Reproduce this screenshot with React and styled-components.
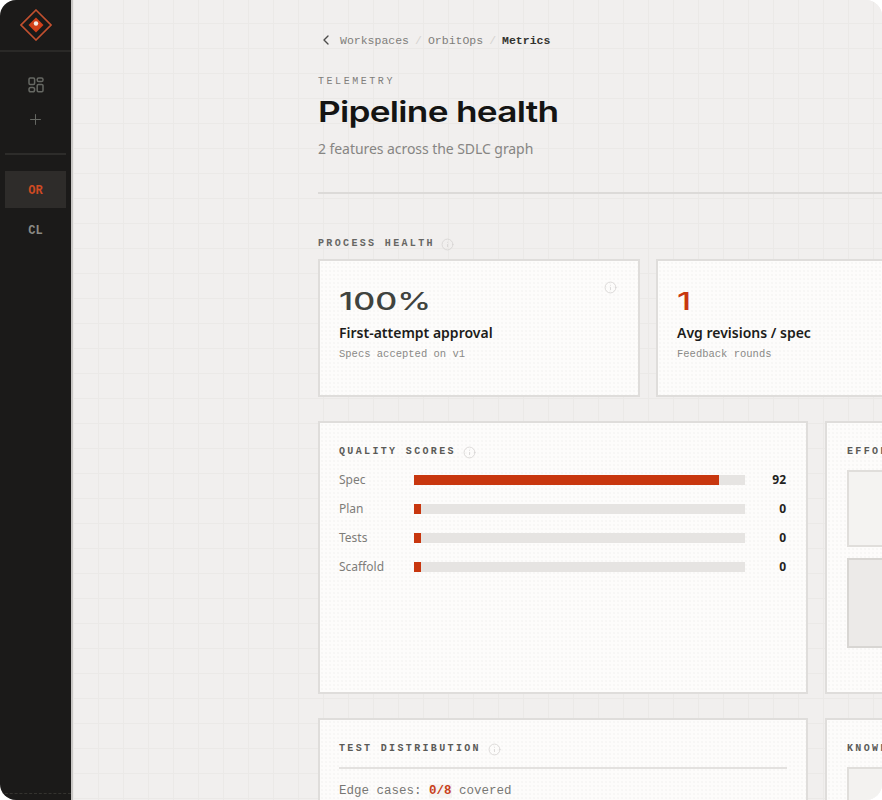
import React from 'react';
import styled, { createGlobalStyle } from 'styled-components';
import { ChevronLeft, Info, Plus } from 'lucide-react';

const Global = createGlobalStyle`
  html, body { margin: 0; padding: 0; background: #fff; }
  * { box-sizing: border-box; }
`;
const MONO = '"Liberation Mono", "DejaVu Sans Mono", monospace';
const SANS = '"Noto Sans", "Open Sans", sans-serif';
const DISPLAY = 'Inter, "Liberation Sans", sans-serif';
const DOTS = 'radial-gradient(circle, #f5f4f2 0.6px, transparent 0.9px)';

const Frame = styled.div`
  width: 882px; height: 800px; display: flex; overflow: hidden;
  border-radius: 16px; background: #f1efee;
  font-family: ${SANS};
`;
const Sidebar = styled.aside`
  width: 73px; flex: none; background: #1b1a19; border-right: 2px solid #c9c7c5;
  display: flex; flex-direction: column; align-items: center; height: 800px;
`;
const LogoCell = styled.div`
  width: 100%; height: 52px; display: flex; align-items: center; justify-content: center;
  border-bottom: 2px solid #2a2927;
`;
const Tools = styled.div`
  width: 61px; height: 103px; display: flex; flex-direction: column; align-items: center;
  padding-top: 25px; gap: 18px; border-bottom: 2px solid #2d2c2a; color: #666863;
`;
const Workspaces = styled.div`
  flex: 1; width: 61px; padding-top: 16px; display: flex; flex-direction: column; gap: 3px;
`;
const Workspace = styled.div`
  height: 37px; padding-top: 3px; display: flex; align-items: center; justify-content: center;
  font: 700 12px ${MONO};
  background: ${p => (p.$active ? '#2e2c2a' : 'transparent')};
  color: ${p => (p.$active ? '#cf4a22' : '#8b8b86')};
`;
const SideFoot = styled.div`
  width: 100%; height: 7px; border-top: 1px dashed #34332f;
`;
const Main = styled.main`
  flex: 1; min-width: 0; height: 800px; overflow: hidden; padding: 32px 0 0 245px;
  background-color: #f1efee;
  background-image: linear-gradient(#ebe9e7 1px, transparent 1px), linear-gradient(90deg, #ebe9e7 1px, transparent 1px);
  background-size: 25px 25px;
  background-position: 0 23px;
`;
const Crumbs = styled.nav`
  display: flex; align-items: center; height: 16px; font: 400 11.5px ${MONO}; color: #7f7e7b; white-space: nowrap;
  svg { margin-right: 6px; color: #4c4c4a; }
`;
const CrumbSep = styled.span`color: #d5d3d0; margin: 0 6px;`;
const CrumbNow = styled.span`font-weight: 700; color: #33332f;`;
const Eyebrow = styled.div`
  margin-top: 27px; height: 14px; font: 400 10px/14px ${MONO}; letter-spacing: 2.55px; color: #7f7e7b;
`;
const Title = styled.h1`
  margin: 5px 0 0; display: inline-block; transform: scaleX(1.215); transform-origin: left center;
  font: 600 29px/36px ${DISPLAY}; letter-spacing: -0.6px; color: #141413; white-space: nowrap;
`;
const Sub = styled.p`
  margin: 9px 0 0; font: 400 14px/20px ${SANS}; letter-spacing: -0.06px; color: #868583; white-space: nowrap;
`;
const Rule = styled.hr`
  width: 600px; height: 2px; border: 0; background: #dcdad8; margin: 33px 0 0;
`;
const SectionLabel = styled.div`
  margin-top: 43px; height: 14px; display: flex; align-items: center; gap: 6px;
  font: 700 10px/14px ${MONO}; letter-spacing: 2.35px; color: #666663; white-space: nowrap;
  svg { color: #d5d3d1; }
`;
const Metrics = styled.div`
  margin-top: 8px; display: grid; grid-template-columns: 322px 322px; gap: 16px;
`;
const cardBase = `
  background-color: #fdfcfb; background-image: ${DOTS}; background-size: 4px 4px;
  border: 2px solid #dfdddb;
`;
const MetricCard = styled.section`
  ${cardBase}
  position: relative; height: 138px; padding: 25px 19px 0;
`;
const MetricValue = styled.div`
  display: inline-block; transform: scaleX(1.42); transform-origin: left center;
  font: 500 24px/32px ${DISPLAY}; color: ${p => p.$accent ? '#c8370f' : '#40433e'}; white-space: nowrap;
`;
const MetricName = styled.div`
  margin-top: 5px; font: 600 14px/20px ${SANS}; color: #1c1c1a; white-space: nowrap;
`;
const MetricNote = styled.div`
  margin-top: 4px; font: 400 10.5px/14px ${MONO}; color: #8a8986; white-space: nowrap;
`;
const CornerInfo = styled.span`
  position: absolute; top: 20px; right: 21px; color: #d5d3d1; display: flex;
`;
const Panels = styled.div`
  margin-top: 24px; display: grid; grid-template-columns: 490px 300px; grid-template-rows: 273px 120px; gap: 24px 17px;
`;
const Panel = styled.section`
  ${cardBase}
  padding: 22px 19px 0 ${p => (p.$side ? 20 : 19)}px;
`;
const PanelTitle = styled.h2`
  margin: 0; height: 14px; display: flex; align-items: center; gap: 7px;
  font: 700 10px/14px ${MONO}; letter-spacing: 2.35px; color: #5a5a57; white-space: nowrap;
  svg { color: #d5d3d1; }
`;
const Scores = styled.div`
  margin-top: 11px; display: flex; flex-direction: column; gap: 9px;
`;
const ScoreRow = styled.div`
  height: 20px; display: grid; grid-template-columns: 75px 331px 41px; align-items: center;
  font: 400 12px/20px ${SANS}; color: #7d7c79;
`;
const Track = styled.div`height: 10px; background: #e6e4e2;`;
const Fill = styled.div`height: 10px; background: #c8370f;`;
const ScoreValue = styled.span`
  text-align: right; font: 700 12px/20px ${SANS}; color: #222220;
`;
const Placeholder = styled.div`
  width: 200px; height: ${p => p.$h}px; margin-top: ${p => p.$mt}px;
  background: ${p => p.$bg}; border: 2px solid ${p => p.$line};
`;
const PanelRule = styled.div`
  margin-top: 11px; height: 2px; background: #e3e1df;
`;
const Coverage = styled.p`
  margin: 12px 0 0; font: 400 12.5px/20px ${MONO}; color: #787774; white-space: nowrap;
`;
const Miss = styled.span`
  color: #c8401a; background: #f5f3f1; font-weight: 700;
`;

const LogoMark = () => (
  <svg width="32" height="32" viewBox="0 0 32 32" fill="none">
    <path d="M16 1 31 16 16 31 1 16Z" stroke="#c2502f" strokeWidth="1.6" />
    <path d="M16 8.5 23.5 16 16 23.5 8.5 16Z" fill="#d1401a" />
    <circle cx="16" cy="14.5" r="2.2" fill="#f4ece8" />
  </svg>
);
const BoardIcon = () => (
  <svg width="16" height="16" viewBox="0 0 16 16" fill="none" stroke="currentColor" strokeWidth="1.5">
    <rect x="1" y="1" width="5.6" height="6.4" rx="1.2" />
    <rect x="9.2" y="1" width="5.8" height="3.6" rx="1.6" />
    <rect x="1" y="10.6" width="5.6" height="4.2" rx="1.8" />
    <rect x="9.2" y="7.4" width="5.8" height="7.4" rx="1.2" />
  </svg>
);
const Tip = () => <Info size={13} strokeWidth={1.5} />;

const scores = [['Spec', 92], ['Plan', 0], ['Tests', 0], ['Scaffold', 0]];

export default function App() {
  return (
    <>
      <Global />
      <Frame>
        <Sidebar>
          <LogoCell><LogoMark /></LogoCell>
          <Tools>
            <BoardIcon />
            <Plus size={17} strokeWidth={1.4} />
          </Tools>
          <Workspaces>
            <Workspace $active>OR</Workspace>
            <Workspace>CL</Workspace>
          </Workspaces>
          <SideFoot />
        </Sidebar>
        <Main>
          <Crumbs>
            <ChevronLeft size={16} strokeWidth={2} />
            <span>Workspaces</span><CrumbSep>/</CrumbSep>
            <span>OrbitOps</span><CrumbSep>/</CrumbSep>
            <CrumbNow>Metrics</CrumbNow>
          </Crumbs>
          <Eyebrow>TELEMETRY</Eyebrow>
          <Title>Pipeline health</Title>
          <Sub>2 features across the SDLC graph</Sub>
          <Rule />
          <SectionLabel>PROCESS HEALTH <Tip /></SectionLabel>
          <Metrics>
            <MetricCard>
              <MetricValue>100%</MetricValue>
              <MetricName>First-attempt approval</MetricName>
              <MetricNote>Specs accepted on v1</MetricNote>
              <CornerInfo><Tip /></CornerInfo>
            </MetricCard>
            <MetricCard>
              <MetricValue $accent>1</MetricValue>
              <MetricName>Avg revisions / spec</MetricName>
              <MetricNote>Feedback rounds</MetricNote>
            </MetricCard>
          </Metrics>
          <Panels>
            <Panel>
              <PanelTitle>QUALITY SCORES <Tip /></PanelTitle>
              <Scores>
                {scores.map(([name, v]) => (
                  <ScoreRow key={name}>
                    <span>{name}</span>
                    <Track><Fill style={{ width: `${Math.max(v, 2)}%` }} /></Track>
                    <ScoreValue>{v}</ScoreValue>
                  </ScoreRow>
                ))}
              </Scores>
            </Panel>
            <Panel $side>
              <PanelTitle>EFFORT</PanelTitle>
              <Placeholder $h={77} $mt={11} $bg="#f4f3f1" $line="#e0dedb" />
              <Placeholder $h={90} $mt={11} $bg="#eceae8" $line="#d8d6d3" />
            </Panel>
            <Panel>
              <PanelTitle>TEST DISTRIBUTION <Tip /></PanelTitle>
              <PanelRule />
              <Coverage>Edge cases: <Miss>0/8</Miss> covered</Coverage>
            </Panel>
            <Panel $side>
              <PanelTitle>KNOWN</PanelTitle>
              <Placeholder $h={80} $mt={11} $bg="#f3f2f0" $line="#e0dedb" />
            </Panel>
          </Panels>
        </Main>
      </Frame>
    </>
  );
}
